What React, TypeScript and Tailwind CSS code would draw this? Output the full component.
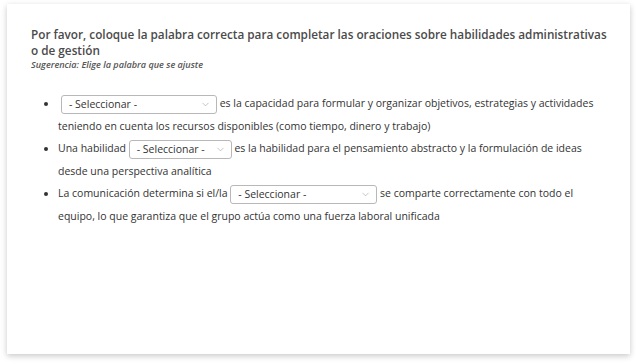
import { ChevronDown } from 'lucide-react';

function Select({ width }: { width: string }) {
  return (
    <span
      className={`inline-flex items-center justify-between h-[19px] align-middle rounded-[3px] border border-[#b8b8b8] bg-white pl-[7px] pr-[5px] ${width}`}
    >
      <span className="text-[10.5px] text-[#333]">- Seleccionar -</span>
      <ChevronDown className="w-[11px] h-[11px] text-[#aaa]" strokeWidth={1.5} />
    </span>
  );
}

export default function App() {
  return (
    <div className="w-[636px] h-[364px] bg-white pt-[4px] pl-[7px] font-['Open_Sans',sans-serif]">
      <div className="w-[623px] h-[350px] bg-white shadow-[0_2px_6px_rgba(0,0,0,0.22)] pl-[24px] pr-[22px] pt-[22px]">
        <h1 className="text-[11.75px] leading-[16px] font-semibold text-[#4a4a4a]">
          Por favor, coloque la palabra correcta para completar las oraciones sobre habilidades administrativas
          o de gestión
        </h1>
        <p className="text-[9.1px] leading-[14px] italic font-semibold text-[#555]">Sugerencia: Elige la palabra que se ajuste</p>

        <ul className="mt-[20px] list-disc pl-[27px] pr-[12px] text-[10.5px] leading-[22.6px] text-[#333]">
          <li>
            <span className="ml-[3px]" />
            <Select width="w-[156px]" /> es la capacidad para formular y organizar objetivos, estrategias y
            actividades teniendo en cuenta los recursos disponibles (como tiempo, dinero y trabajo)
          </li>
          <li>
            Una habilidad <Select width="w-[103px]" /> es la habilidad para el pensamiento abstracto y la formulación
            de ideas desde una perspectiva analítica
          </li>
          <li>
            La comunicación determina si el/la <Select width="w-[147px]" /> se comparte correctamente con todo el
            equipo, lo que garantiza que el grupo actúa como una fuerza laboral unificada
          </li>
        </ul>
      </div>
    </div>
  );
}
